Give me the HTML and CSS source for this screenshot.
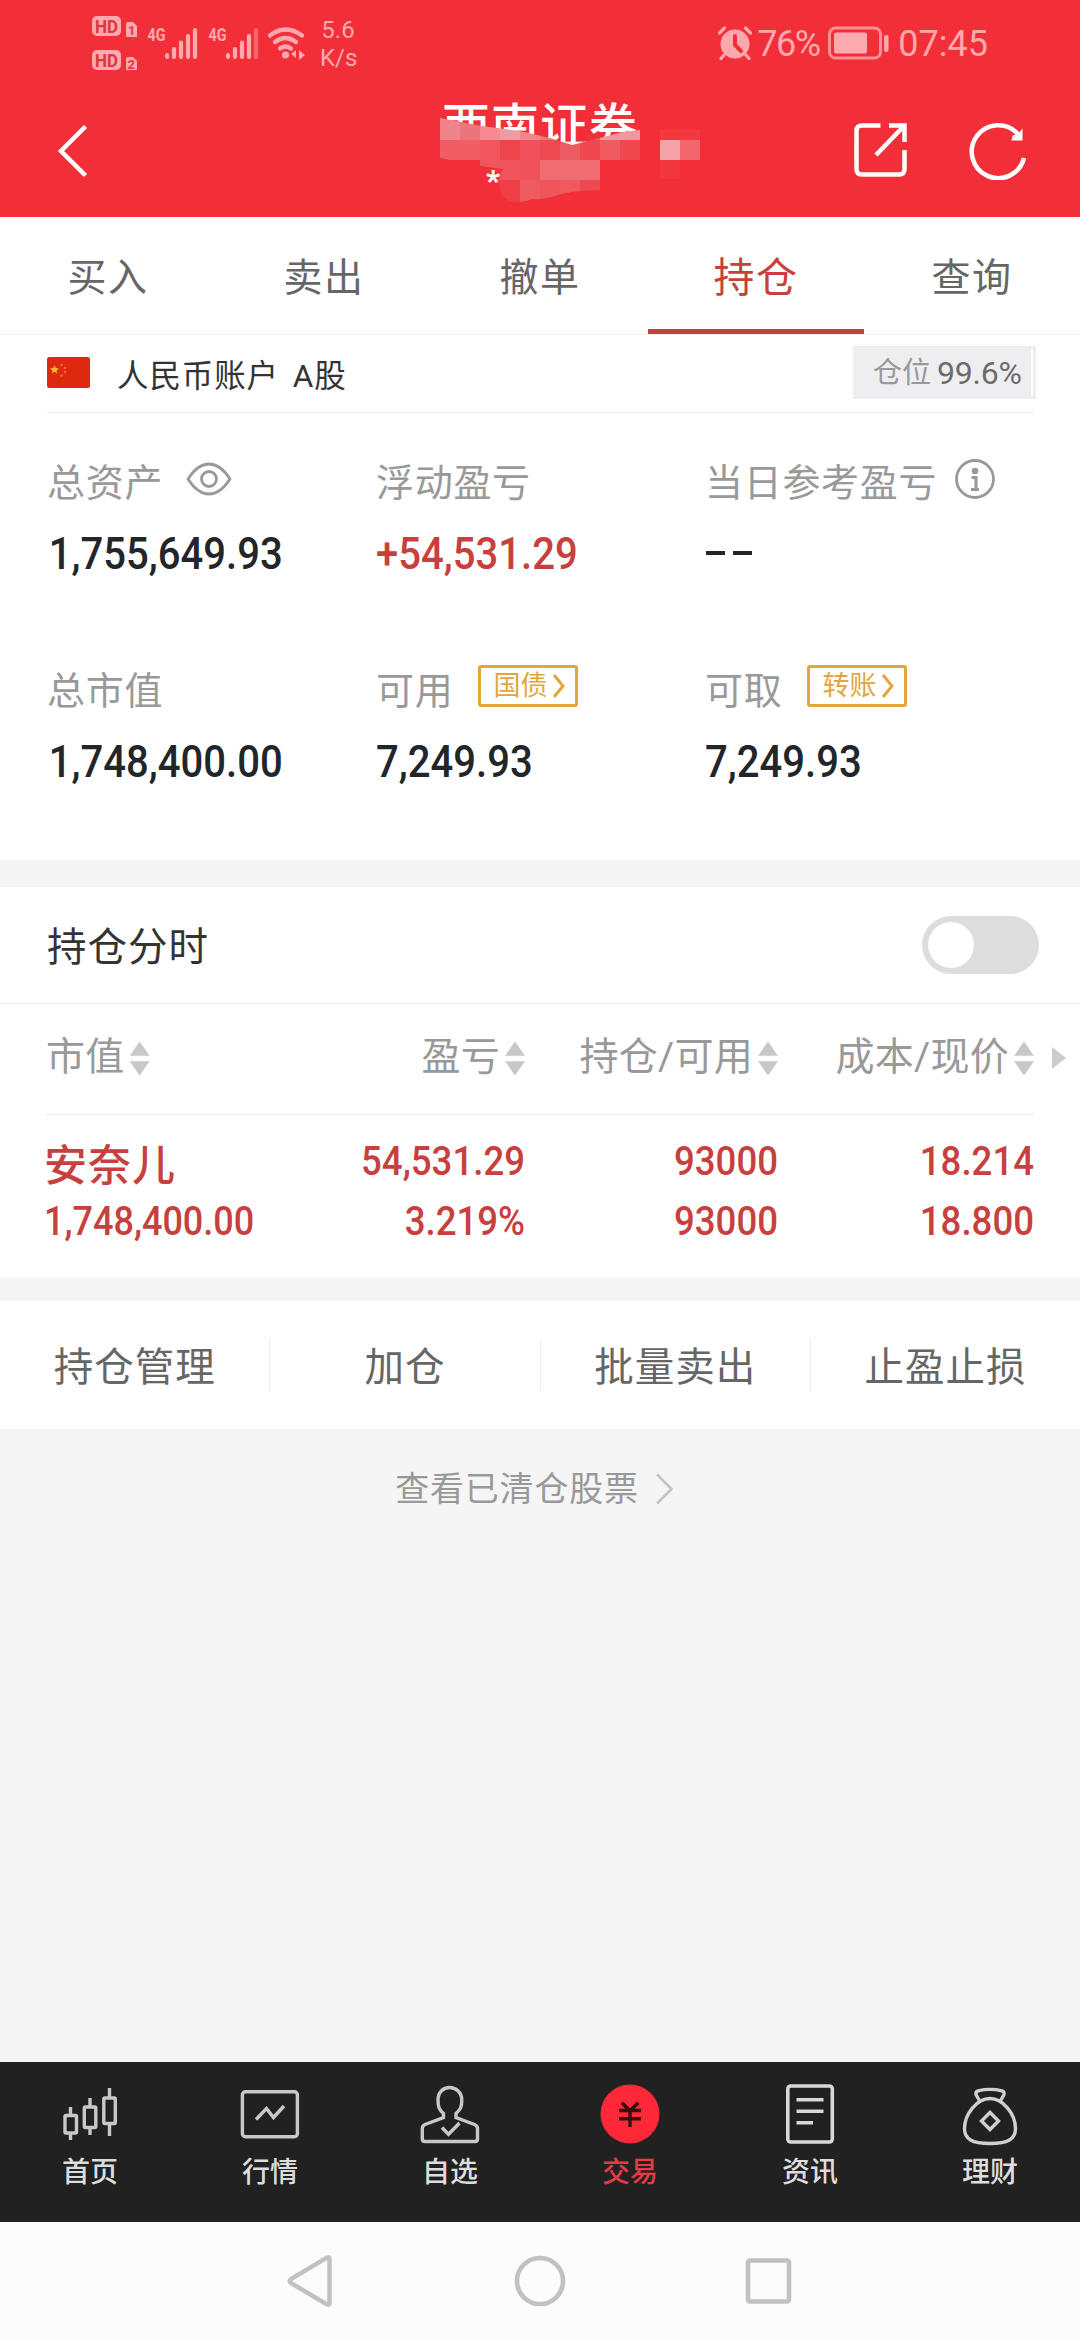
FILE: index.html
```html
<!DOCTYPE html>
<html lang="zh-CN">
<head>
<meta charset="utf-8">
<title>持仓</title>
<link rel="stylesheet" href="styles.css">
</head>
<body>
<div class="app">
  <header class="header">
    <div class="status">
      <svg class="status-net" width="216" height="64" viewBox="90 10 216 64">
        <g fill="#ffa9ae">
          <rect x="92" y="16" width="29" height="20" rx="5"/>
          <rect x="92" y="50" width="29" height="20" rx="5"/>
          <path d="M126 24q0-2 2-2h5l4 4v11h-11zM126 59q0-2 2-2h5l4 4v9h-11z"/>
          <text class="g4" x="147.500" y="41" textLength="18" lengthAdjust="spacingAndGlyphs">4G</text>
          <text class="g4" x="208.500" y="41" textLength="18" lengthAdjust="spacingAndGlyphs">4G</text>
          <circle cx="285.500" cy="55" r="3.600"/>
          <path d="M296 50v8l-5-4zM299 50v10l6-5z"/>
        </g>
        <g fill="#e0353f">
          <text class="hd" x="95" y="32.500" textLength="23" lengthAdjust="spacingAndGlyphs">HD</text>
          <text class="hd" x="95" y="66.500" textLength="23" lengthAdjust="spacingAndGlyphs">HD</text>
          <text class="sim" x="128" y="35">1</text>
          <text class="sim" x="127.500" y="69">2</text>
        </g>
        <g stroke="#ffa9ae" stroke-width="4.200" stroke-linecap="round" fill="none">
          <path d="M167 55v2M174 49v8M181 42.500V57M188 36V57M195 30V57"/>
          <path d="M228 55v2M235 49v8M242 42.500V57M249 36V57"/>
          <path d="M256 30V57" stroke="#f9656d"/>
          <path d="M270 35.500q15.500-12 32 0M275 42q10.500-8 21 0M280 48.500q5.500-4 11 0"/>
        </g>
      </svg>
      <div class="speed">5.6<br>K/s</div>
      <div class="status-right">
        <svg width="34" height="34" viewBox="0 0 34 34">
          <circle cx="17" cy="18" r="14.500" fill="#ffa9ae"/>
          <path d="M1.500 7l5-5M32.500 7l-5-5M6 29l-3 3.500M28 29l3 3.500" stroke="#ffa9ae" stroke-width="3.200" stroke-linecap="round"/>
          <path d="M17 10v9l6 6" stroke="#f22f38" stroke-width="4" fill="none" stroke-linecap="round"/>
        </svg>
        <span class="percent">76%</span>
        <svg class="battery" width="62" height="34" viewBox="0 0 62 34">
          <rect x="1.500" y="2" width="51" height="30" rx="6" fill="none" stroke="#fb8f95" stroke-width="3"/>
          <rect x="6" y="6.500" width="33" height="21" rx="2" fill="#ffa9ae"/>
          <rect x="56" y="9" width="4.500" height="17" rx="2.200" fill="#ffa9ae"/>
        </svg>
        <span class="clock">07:45</span>
      </div>
    </div>
    <div class="titlebar">
      <svg class="back" width="34" height="54" viewBox="0 0 34 54"><path d="M30.500 2.500L6 27l24.500 24.500" fill="none" stroke="#fff" stroke-width="4.500"/></svg>
      <div class="titles">
        <div class="title">西南证券</div>
        <div class="sub">*</div>
        <svg class="mask" width="280" height="100" viewBox="440 110 280 100">
          <defs><clipPath id="blot"><path d="M440 118L482 126 520 131 550 138 572 145 600 138 622 132 640 130V160H600V190Q570 190 552 197Q540 200 532 199Q516 206 504 198Q494 184 503 169L480 166V160H450L440 158Z"/></clipPath></defs>
          <g clip-path="url(#blot)">
            <path fill="#ee8389" d="M440 110h20v30h-20z"/><path fill="#ec757b" d="M460 110h20v30h-20z"/><path fill="#f78a90" d="M480 110h20v30h-20z"/><path fill="#ed9da2" d="M500 110h20v30h-20z"/><path fill="#f1858b" d="M520 110h20v30h-20z"/><path fill="#f0757b" d="M540 110h20v30h-20z"/><path fill="#ee6067" d="M560 110h40v30h-40z"/><path fill="#f2979d" d="M600 110h40v30h-40z"/>
            <path fill="#f25c64" d="M440 140h40v20h-40z"/><path fill="#f2555c" d="M480 140h20v20h-20z"/><path fill="#ee454c" d="M500 140h20v20h-20z"/><path fill="#f0515a" d="M520 140h20v20h-20z"/><path fill="#ef4a52" d="M540 140h20v20h-20z"/><path fill="#ee5a62" d="M560 140h20v20h-20z"/><path fill="#ef4850" d="M580 140h20v20h-20z"/><path fill="#f15a61" d="M600 140h20v20h-20z"/><path fill="#ef474e" d="M620 140h20v20h-20z"/>
            <path fill="#f0555d" d="M480 160h40v20h-40z"/><path fill="#f0505a" d="M520 160h20v20h-20z"/><path fill="#ef6c72" d="M540 160h60v20h-60z"/>
            <path fill="#ef3e46" d="M490 180h30v30h-30z"/><path fill="#f05a61" d="M520 180h20v30h-20z"/><path fill="#ef555c" d="M540 180h20v30h-20z"/><path fill="#ee5a60" d="M560 180h20v30h-20z"/><path fill="#ee4a51" d="M580 180h20v30h-20z"/>
          </g>
          <path fill="#f5a2a8" d="M660 140h20v20h-20z"/><path fill="#f2666d" d="M680 140h20v20h-20z"/>
          <path fill="#f2373f" d="M660 129h40v11h-40zM660 160h20v19h-20z"/>
        </svg>
      </div>
      <div class="actions">
        <svg width="56" height="56" viewBox="0 0 56 56" fill="none" stroke="#fff" stroke-width="4.500"><path d="M27.500 3.500H9Q3.500 3.500 3.500 9V47Q3.500 52.500 9 52.500H46Q51.500 52.500 51.500 47V28M36 3.500H51.500V20M50 5L23 33"/></svg>
        <svg width="58" height="58" viewBox="0 0 58 58"><path d="M55 36A26.500 26.500 0 1 1 49 12" fill="none" stroke="#fff" stroke-width="4.500"/><path d="M53.500 6.500V18.500H42.500L43.500 13.500 49 12z" fill="#fff"/></svg>
      </div>
    </div>
  </header>

  <nav class="tabs">
    <span class="tab">买入</span><span class="tab">卖出</span><span class="tab">撤单</span><span class="tab tab-on">持仓</span><span class="tab">查询</span>
  </nav>

  <section class="account">
    <div class="account-head">
      <svg class="flag" width="43" height="31" viewBox="0 0 43 31"><rect width="43" height="31" rx="2.500" fill="#de2910"/><path fill="#fdb62c" d="M7.500 8l1.200 3.100 3.300.2-2.500 2.100.8 3.200-2.800-1.800-2.800 1.800.8-3.200L3 11.300l3.300-.2z"/><g fill="#f06a20"><circle cx="14.500" cy="8" r="1.300"/><circle cx="18" cy="11" r="1.300"/><circle cx="18" cy="15" r="1.300"/><circle cx="14.500" cy="18.500" r="1.300"/></g></svg>
      <span class="account-name">人民币账户 A股</span>
      <span class="position"><span>仓位</span><b>99.6%</b></span>
    </div>
    <div class="grid">
      <div class="cell"><div class="label">总资产<svg class="eye" width="46" height="34" viewBox="0 0 46 34" fill="none" stroke="#999" stroke-width="2.800"><path d="M2 17C9 6 16 2 23 2S37 6 44 17C37 28 30 32 23 32S9 28 2 17z"/><circle cx="23" cy="17" r="7.500"/></svg></div><div class="value">1,755,649.93</div></div>
      <div class="cell"><div class="label">浮动盈亏</div><div class="value up">+54,531.29</div></div>
      <div class="cell"><div class="label">当日参考盈亏<svg class="info" width="42" height="42" viewBox="0 0 42 42"><circle cx="21" cy="21" r="18.500" fill="none" stroke="#999" stroke-width="2.800"/><circle cx="21" cy="13" r="3.300" fill="#999"/><path d="M17.500 19.500H22V31M17 31.500H25" stroke="#999" stroke-width="3.200" fill="none"/></svg></div><div class="value none"><svg width="47" height="32" viewBox="0 0 47 32"><path d="M0 16h19M27 16h19" stroke="#222529" stroke-width="4"/></svg></div></div>
      <div class="cell"><div class="label">总市值</div><div class="value">1,748,400.00</div></div>
      <div class="cell"><div class="label">可用<span class="link">国债<svg width="14" height="26" viewBox="0 0 14 26"><path d="M2 2l9 11-9 11" fill="none" stroke="#e3a63c" stroke-width="3"/></svg></span></div><div class="value cash">7,249.93</div></div>
      <div class="cell"><div class="label">可取<span class="link">转账<svg width="14" height="26" viewBox="0 0 14 26"><path d="M2 2l9 11-9 11" fill="none" stroke="#e3a63c" stroke-width="3"/></svg></span></div><div class="value cash">7,249.93</div></div>
    </div>
  </section>

  <section class="holdings">
    <div class="toggle-row"><span>持仓分时</span><span class="switch"><i></i></span></div>
    <div class="row head">
      <span class="c1">市值<i class="sort"></i></span><span class="c2">盈亏<i class="sort"></i></span><span class="c3">持仓/可用<i class="sort"></i></span><span class="c4">成本/现价<i class="sort"></i></span><i class="more"></i>
    </div>
    <div class="row stock">
      <div class="c1"><strong>安奈儿</strong><span>1,748,400.00</span></div>
      <div class="c2"><span>54,531.29</span><span>3.219%</span></div>
      <div class="c3"><span>93000</span><span>93000</span></div>
      <div class="c4"><span>18.214</span><span>18.800</span></div>
    </div>
  </section>

  <section class="ops"><span>持仓管理</span><span>加仓</span><span>批量卖出</span><span>止盈止损</span></section>

  <div class="cleared">查看已清仓股票<svg width="20" height="32" viewBox="0 0 20 32"><path d="M2 1.500l14.500 14.500L2 30.500" fill="none" stroke="#c4c4c4" stroke-width="2.600"/></svg></div>

  <footer class="bottom">
    <div class="item"><svg viewBox="0 0 60 66"><g fill="none" stroke="#c8c8c8" stroke-width="3.400"><rect x="5" y="33.500" width="11.500" height="17.500" rx="1"/><rect x="24.300" y="25" width="11.500" height="20.500" rx="1"/><rect x="43.800" y="16" width="11.500" height="25.500" rx="1"/><path d="M10.500 25v8.500M10.500 51v7M30 16v9M30 45.500V53M49.500 6v10M49.500 41.500V54"/></g></svg>首页</div>
    <div class="item"><svg viewBox="0 0 60 66"><g fill="none" stroke="#c8c8c8" stroke-width="3.400"><rect x="2.400" y="9.700" width="55" height="45" rx="3"/><path d="M16 37.500l10.500-11 7 9L44 24"/></g></svg>行情</div>
    <div class="item"><svg viewBox="0 0 60 66"><g fill="none" stroke="#c8c8c8" stroke-width="3.400"><path d="M23.500 31.500C19 27.500 18 25 18 18C18 10 23.500 5.500 29.500 5.500S41.800 10 41.800 18C41.800 25 40.500 27.500 36 31.500V35.500L54.500 42.500Q57.500 43.700 57.500 46.500V57Q57.500 59.500 55 59.500H5Q2.300 59.500 2.300 57V46.500Q2.300 43.700 5 42.500L23.500 35.500z"/><path d="M22 45.500l6.500 6.800L39.500 41"/></g></svg>自选</div>
    <div class="item item-on"><svg viewBox="0 0 60 66"><circle cx="30" cy="32" r="29.500" fill="#ff2838"/><path d="M21.800 20.800l8.200 8 8.200-8M19 28.500h22M19 36.700h22M30 28v17" fill="none" stroke="#311" stroke-width="3.400"/></svg>交易</div>
    <div class="item"><svg viewBox="0 0 60 66"><g fill="none" stroke="#d8d8d8" stroke-width="3.600"><rect x="7.800" y="4" width="44.500" height="56" rx="3"/><path d="M16.500 17.700h27M16.500 29.300h27M16.500 40.700H33"/></g></svg>资讯</div>
    <div class="item"><svg viewBox="0 0 60 66"><g fill="none" stroke="#d0d0d0" stroke-width="3.400"><path d="M30 16.500C43 16.500 55.500 32 55.500 46.500C55.500 57 48 61.500 30 61.500S4.500 57 4.500 46.500C4.500 32 17 16.500 30 16.500z"/><path d="M20 19.500L16.200 13Q15 10 18 8.800Q30 6 42 8.800Q45 10 43.800 13L40 19.500"/><path d="M30 30.500l8.500 8.500-8.500 8.500-8.500-8.500z"/></g></svg>理财</div>
  </footer>

  <div class="sysnav">
    <svg width="52" height="56" viewBox="0 0 52 56"><path d="M42 4.500Q44.500 3.500 44.500 6V50Q44.500 52.500 42 51.500L6 30Q3.500 28 6 26z" fill="none" stroke="#c1c1c1" stroke-width="4.500"/></svg>
    <svg width="52" height="56" viewBox="0 0 52 56"><circle cx="26" cy="28" r="23" fill="none" stroke="#c1c1c1" stroke-width="4.600"/></svg>
    <svg width="52" height="56" viewBox="0 0 52 56"><rect x="5" y="7.500" width="41" height="41" rx="2" fill="none" stroke="#c1c1c1" stroke-width="4.600"/></svg>
  </div>
</div>
</body>
</html>
```

FILE: styles.css
```css
* { box-sizing: border-box; }
body {
  margin: 0;
  font-family: Roboto, "Noto Sans CJK SC", sans-serif;
  color: #666;
}
svg { display: block; flex: none; }
.app {
  width: 1080px;
  height: 2340px;
  display: flex;
  flex-direction: column;
  background: #f5f5f5;
  overflow: hidden;
  white-space: nowrap;
}

/* header */
.header { height: 217px; background: #f22f38; color: #ffa9ae; flex: none; }
.status { display: flex; height: 84px; padding: 10px 92px 0 90px; }
.hd { font: 700 18px Roboto, sans-serif; }
.sim { font: 700 13px Roboto, sans-serif; }
.g4 { font: 700 19px Roboto, sans-serif; }
.speed { margin-left: 14px; width: 36px; padding-top: 6px; font-size: 24px; line-height: 28px; text-align: center; }
.status-right { margin-left: auto; display: flex; align-items: center; height: 66px; }
.status-right svg { margin-top: -1px; }
.percent, .clock { font-size: 36px; line-height: 40px; padding-top: 2px; }
.percent { margin-left: 5px; width: 71px; letter-spacing: -1.5px; }
.clock { margin-left: 8px; }
.titlebar { display: flex; height: 133px; padding: 0 53px 0 55px; justify-content: space-between; position: relative; color: #fff; }
.back { margin-top: 40px; }
.titles { position: absolute; left: 440px; top: 0; width: 280px; height: 133px; }
.title { font-size: 48px; font-weight: 500; letter-spacing: 1px; line-height: 60px; padding: 13px 0 0 2px; }
.sub { position: absolute; left: 46px; top: 79px; font-size: 30px; font-weight: 900; line-height: 36px; }
.mask { position: absolute; left: 0; top: 26px; }
.actions { display: flex; gap: 60px; padding-top: 38px; }

/* trading tabs */
.tabs { display: flex; height: 118px; background: #fff; border-bottom: 1px solid #eee; flex: none; }
.tab { flex: 1; text-align: center; font-size: 39px; letter-spacing: 1.500px; line-height: 122px; height: 117px; }
.tab-on { color: #c8403e; font-size: 41px; border-bottom: 5px solid #c1413f; }

/* account summary */
.account { background: #fff; height: 525px; flex: none; padding: 0 46px 0 47px; }
.account-head { display: flex; align-items: center; height: 78px; border-bottom: 1px solid #eee; color: #333; padding-bottom: 1px; }
.account-name { margin-left: 27px; font-size: 31.500px; letter-spacing: .9px; word-spacing: 5px; }
.flag { margin-top: -1px; }
.position { margin: -1px -2px 0 auto; width: 183px; height: 53px; padding-left: 20px; background: linear-gradient(90deg, transparent 178px, #fff 178px, #fff 180px, transparent 180px) no-repeat 0 3px / 100% 47px #eeeef0; display: flex; align-items: center; gap: 6px; font-size: 29px; line-height: 40px; color: #999; }
.position b { font-size: 32px; font-weight: 400; color: #6c6c6c; letter-spacing: -.2px; }
.grid { display: grid; grid-template-columns: 329px 329px 1fr; grid-template-rows: 208px 1fr; padding-top: 36px; }
.label { display: flex; align-items: center; height: 60px; font-size: 38px; letter-spacing: .7px; color: #999; }
.value { height: 48px; margin-top: 21px; font-size: 45px; line-height: 48px; font-weight: 500; letter-spacing: 0; color: #222529; padding-left: 2px; transform: scaleX(.89); transform-origin: 0 50%; }
.value.up { color: #c8403e; padding-left: 0; }
.value.cash { padding-left: 0; }
.value.none { transform: none; padding: 7px 0 0 1px; }
.eye { margin-left: 23px; }
.info { margin-left: 17px; }
.link { display: flex; align-items: center; gap: 5px; margin: -2px 0 0 25px; width: 100px; height: 42px; padding-left: 12px; border: 3px solid #e3a63c; border-radius: 3px; color: #e3a63c; font-size: 27px; line-height: 34px; letter-spacing: 0; }

/* holdings */
.holdings { margin-top: 27px; background: #fff; height: 391px; flex: none; }
.toggle-row { display: flex; justify-content: space-between; align-items: center; height: 117px; padding: 0 41px 0 47px; border-bottom: 1px solid #eee; font-size: 39.500px; letter-spacing: 1px; color: #333; }
.toggle-row span:first-child { margin-top: -3px; }
.switch { width: 117px; height: 58px; border-radius: 29px; background: #ddd; padding: 6px; }
.switch i { display: block; width: 46px; height: 46px; border-radius: 50%; background: #fff; }
.row { display: grid; grid-template-columns: 225px 254px 253px 256px 1fr; margin-left: 46px; }
.head { height: 111px; align-items: center; position: relative; font-size: 39px; letter-spacing: .3px; line-height: 50px; color: #999; width: 988px; border-bottom: 1px solid #eee; padding-bottom: 5px; }
.head span { display: flex; align-items: center; gap: 5px; justify-content: flex-end; }
.head .c1 { justify-content: flex-start; }
.sort { width: 20px; height: 34px; margin-top: 4px; background: #c8c8c8; clip-path: polygon(50% 0, 100% 42%, 0 42%, 0 58%, 50% 100%, 100% 58%, 0 58%, 0 42%); }
.more { position: absolute; right: -32px; top: 43px; border-left: 14px solid #ccc; border-top: 11px solid transparent; border-bottom: 11px solid transparent; }
.stock { color: #c8403e; font-size: 40px; font-weight: 500; padding-top: 17px; line-height: 60px; }
.stock div { display: flex; flex-direction: column; text-align: right; }
.stock span { transform: scaleX(.915); transform-origin: 100% 50%; }
.stock .c1 { text-align: left; margin-left: -2px; }
.stock .c1 span { transform: scaleX(.9); transform-origin: 0 50%; }
.stock strong { font-size: 43px; font-weight: 500; letter-spacing: 1px; height: 60px; line-height: 69px; }

/* actions */
.ops { margin-top: 23px; height: 128px; background: #fff; display: flex; align-items: center; flex: none; }
.ops span { flex: 1; height: 52px; line-height: 57px; text-align: center; font-size: 39.500px; letter-spacing: 1px; border-left: 1px solid #eee; }
.ops span:first-child { border-left: 0; }
.cleared { flex: 1; padding: 36px 10px 0 0; display: flex; justify-content: center; align-items: flex-start; font-size: 34px; letter-spacing: .8px; line-height: 49px; color: #999; }
.cleared svg { margin: 8px 0 0 16px; }

/* bottom navigation */
.bottom { height: 160px; background: #212121; display: flex; flex: none; color: #ddd; }
.item { flex: 1; display: flex; flex-direction: column; align-items: center; padding-top: 20px; font-size: 28px; font-weight: 500; line-height: 40px; }
.item svg { width: 60px; height: 66px; margin-bottom: 5px; }
.item-on { color: #e43a45; }
.sysnav { height: 118px; background: #fcfcfc; flex: none; display: flex; justify-content: center; gap: 177px; padding-top: 31px; }
```
